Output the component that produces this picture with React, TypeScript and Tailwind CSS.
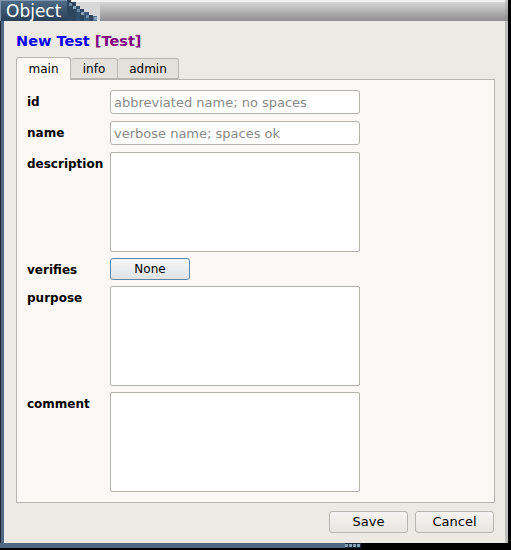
import React from "react";

const font = { fontFamily: '"DejaVu Sans", Verdana, sans-serif' };

function Field({ placeholder }: { placeholder: string }) {
  return (
    <input
      readOnly
      placeholder={placeholder}
      className="h-[24px] w-[250px] rounded-[3px] border border-[#b5b1ad] bg-white px-[3px] text-[13px] text-black outline-none placeholder:text-[#8a8a8a]"
      style={font}
    />
  );
}

function Area() {
  return <div className="h-[100px] w-[250px] rounded-[2px] border border-[#b5b1ad] bg-white" />;
}

function Row({ label, children, cls }: { label: string; children: React.ReactNode; cls: string }) {
  return (
    <div className={`flex ${cls}`}>
      <div className="w-[83px] pt-[3px] text-[12px] font-bold text-black">{label}</div>
      {children}
    </div>
  );
}

export default function App() {
  return (
    <div className="flex h-[550px] w-[511px] flex-col bg-black" style={font}>
      {/* title bar */}
      <div className="flex h-[21px] shrink-0">
        <div className="flex h-[21px] w-[67px] items-center border-l border-t border-[#7d95ad] bg-gradient-to-b from-[#4d6984] to-[#2a4058] pl-[5px] text-[17px] leading-none text-white">
          Object
        </div>
        <svg width="33" height="21" viewBox="0 0 33 21" className="shrink-0">
          <rect width="33" height="21" fill="#d8d8d8" />
          <rect x="0" y="0" width="33" height="2" fill="#f2f2f2" />
          <rect x="0" y="0" width="4" height="21" fill="#2e4660" />
          <rect x="4" y="2" width="5" height="19" fill="#2e4660" />
          <rect x="9" y="6" width="4" height="15" fill="#33506c" />
          <rect x="13" y="9" width="4" height="12" fill="#2e4660" />
          <rect x="17" y="12" width="5" height="9" fill="#3a5a78" />
          <rect x="22" y="15" width="4" height="6" fill="#2e4660" />
          <rect x="26" y="16" width="4" height="5" fill="#4d6e8e" />
          <rect x="2" y="3" width="3" height="3" fill="#6f8aa6" />
          <rect x="6" y="6" width="3" height="3" fill="#8aa3bc" />
          <rect x="10" y="9" width="3" height="3" fill="#6f8aa6" />
          <rect x="14" y="12" width="3" height="3" fill="#8aa3bc" />
          <rect x="19" y="15" width="3" height="3" fill="#6f8aa6" />
          <rect x="27" y="17" width="3" height="3" fill="#8aa3bc" />
        </svg>
        <div className="h-[21px] flex-1 border-t-2 border-[#f0f0f0] bg-gradient-to-b from-[#d6d6d6] to-[#8f8f8f]" />
        <div className="h-[21px] w-[3px] bg-gradient-to-b from-[#c8c8c8] to-[#8a8a8a]" />
        <div className="w-[3px] bg-black" />
      </div>

      {/* body */}
      <div className="flex flex-1">
        <div className="w-[4px] border-l border-[#1c2a38] bg-[#4f6882]" />
        <div className="flex flex-1 flex-col bg-[#edeae6] pl-[12px] pr-[10px] text-black">
          <div className="mt-[13px] h-[22px] text-[14.5px] font-bold leading-none">
            <span className="text-[#0000ee]">New Test </span>
            <span className="text-[#800080]">[Test]</span>
          </div>
          <div className="flex h-[23px] items-end text-[12px]">
            <div className="relative z-10 -mb-px flex h-[23px] w-[55px] items-center justify-center rounded-t-[3px] border border-b-0 border-[#b8b4b0] bg-[#fcf8f5]">
              main
            </div>
            <div className="flex h-[21px] w-[47px] items-center justify-center rounded-t-[3px] border border-l-0 border-[#b8b4b0] bg-[#e4e1dd]">
              info
            </div>
            <div className="flex h-[21px] w-[61px] items-center justify-center rounded-t-[3px] border border-l-0 border-[#b8b4b0] bg-[#e4e1dd]">
              admin
            </div>
          </div>
          <div className="flex h-[424px] w-[479px] flex-col border border-[#b8b4b0] bg-[#fcf8f5] pl-[10px] pt-[10px]">
            <Row label="id" cls="h-[24px]">
              <Field placeholder="abbreviated name; no spaces" />
            </Row>
            <Row label="name" cls="mt-[7px] h-[24px]">
              <Field placeholder="verbose name; spaces ok" />
            </Row>
            <Row label="description" cls="mt-[7px] h-[100px]">
              <Area />
            </Row>
            <Row label="verifies" cls="mt-[6px] h-[22px]">
              <button className="h-[22px] w-[80px] rounded-[3px] border border-[#5b87ab] bg-gradient-to-b from-[#f6f7f8] to-[#dfe3e7] text-[12px] text-black">
                None
              </button>
            </Row>
            <Row label="purpose" cls="mt-[6px] h-[100px]">
              <Area />
            </Row>
            <Row label="comment" cls="mt-[6px] h-[100px]">
              <Area />
            </Row>
          </div>
          <div className="mt-[8px] flex justify-end gap-[7px] pr-[1px]">
            <button className="h-[22px] w-[79px] rounded-[3px] border border-[#b8b4b0] bg-gradient-to-b from-[#f6f4f2] to-[#e8e5e1] text-[13px]">
              Save
            </button>
            <button className="h-[22px] w-[79px] rounded-[3px] border border-[#b8b4b0] bg-gradient-to-b from-[#f6f4f2] to-[#e8e5e1] text-[13px]">
              Cancel
            </button>
          </div>
        </div>
        <div className="w-[3px] bg-[#bdbdbd]" />
        <div className="w-[3px] bg-black" />
      </div>
      {/* bottom frame */}
      <div className="flex h-[5px] shrink-0">
        <div className="w-[345px] bg-[#4f6882]" />
        <div className="flex w-[16px] items-center gap-[1px] bg-[#1c2a38]">
          <div className="h-[3px] w-[3px] bg-[#8aa3bc]" />
          <div className="h-[3px] w-[3px] bg-[#8aa3bc]" />
          <div className="h-[3px] w-[3px] bg-[#8aa3bc]" />
          <div className="h-[3px] w-[3px] bg-[#8aa3bc]" />
        </div>
        <div className="flex-1 bg-black" />
      </div>
      <div className="h-[2px] shrink-0 bg-black" />
    </div>
  );
}
